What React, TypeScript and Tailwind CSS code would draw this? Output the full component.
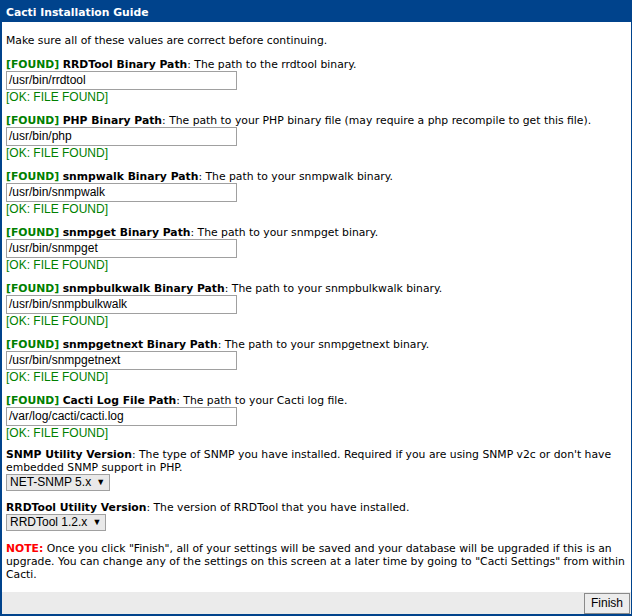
import React from "react";

const items = [
  { name: "RRDTool Binary Path", desc: "The path to the rrdtool binary.", value: "/usr/bin/rrdtool" },
  { name: "PHP Binary Path", desc: "The path to your PHP binary file (may require a php recompile to get this file).", value: "/usr/bin/php" },
  { name: "snmpwalk Binary Path", desc: "The path to your snmpwalk binary.", value: "/usr/bin/snmpwalk" },
  { name: "snmpget Binary Path", desc: "The path to your snmpget binary.", value: "/usr/bin/snmpget" },
  { name: "snmpbulkwalk Binary Path", desc: "The path to your snmpbulkwalk binary.", value: "/usr/bin/snmpbulkwalk" },
  { name: "snmpgetnext Binary Path", desc: "The path to your snmpgetnext binary.", value: "/usr/bin/snmpgetnext" },
  { name: "Cacti Log File Path", desc: "The path to your Cacti log file.", value: "/var/log/cacti/cacti.log" },
];

const verdana = "font-['DejaVu_Sans',Verdana,sans-serif]";
const arial = "font-['Liberation_Sans',Arial,sans-serif]";

function Select({ label }: { label: string }) {
  return (
    <div className={`inline-flex items-center h-[17px] border border-[#a0a0a0] bg-[#e9e9e9] pl-[3px] pr-[4px] text-[12px] leading-[15px] text-black ${arial}`}>
      <span>{label}</span>
      <span className="ml-[5px] text-[9px]">▼</span>
    </div>
  );
}

export default function App() {
  return (
    <div className={`w-[633px] h-[616px] bg-white ${verdana} text-[10.8px] leading-[13px] text-black`}>
      <div className="w-[632px] h-[616px] flex flex-col border-x-2 border-b-2 border-[#00438c] border-r-[1px]">
        <div className="h-[22px] bg-[#00438c] text-white font-bold text-[10.8px] flex items-center pl-[4px] pt-[2px]">
          Cacti Installation Guide
        </div>
        <div className="flex-1 pl-[4px] pr-[6px] pt-[12px]">
          <div className="h-[13px]">Make sure all of these values are correct before continuing.</div>
          <div className="mt-[11px] flex flex-col gap-[10px]">
            {items.map((it) => (
              <div key={it.name} className="flex flex-col">
                <div className="h-[13px] whitespace-nowrap">
                  <span className="font-bold text-[#008000]">[FOUND]</span>{" "}
                  <span className="font-bold">{it.name}</span>: {it.desc}
                </div>
                <div className={`w-[231px] h-[19px] border border-[#a0a0a0] bg-white pl-[2px] text-[12px] leading-[17px] ${arial}`}>
                  {it.value}
                </div>
                <div className={`h-[14px] text-[12px] leading-[14px] text-[#008000] ${arial}`}>[OK: FILE FOUND]</div>
              </div>
            ))}
          </div>
          <div className="mt-[8px]">
            <span className="font-bold">SNMP Utility Version</span>: The type of SNMP you have installed. Required if you are using SNMP v2c or don't have embedded SNMP support in PHP.
          </div>
          <div className="flex">
            <Select label="NET-SNMP 5.x" />
          </div>
          <div className="mt-[10px]">
            <span className="font-bold">RRDTool Utility Version</span>: The version of RRDTool that you have installed.
          </div>
          <div className="flex">
            <Select label="RRDTool 1.2.x" />
          </div>
          <div className="mt-[11px]">
            <span className="font-bold text-[#ff0000]">NOTE:</span> Once you click "Finish", all of your settings will be saved and your database will be upgraded if this is an upgrade. You can change any of the settings on this screen at a later time by going to "Cacti Settings" from within Cacti.
          </div>
        </div>
        <div className="h-[22px] bg-[#ebebeb] flex justify-end items-center pr-[1px]">
          <div className={`h-[21px] px-[6px] border border-[#8a8a8a] bg-[#ececec] text-[12px] leading-[19px] text-black ${arial}`}>
            Finish
          </div>
        </div>
      </div>
    </div>
  );
}
